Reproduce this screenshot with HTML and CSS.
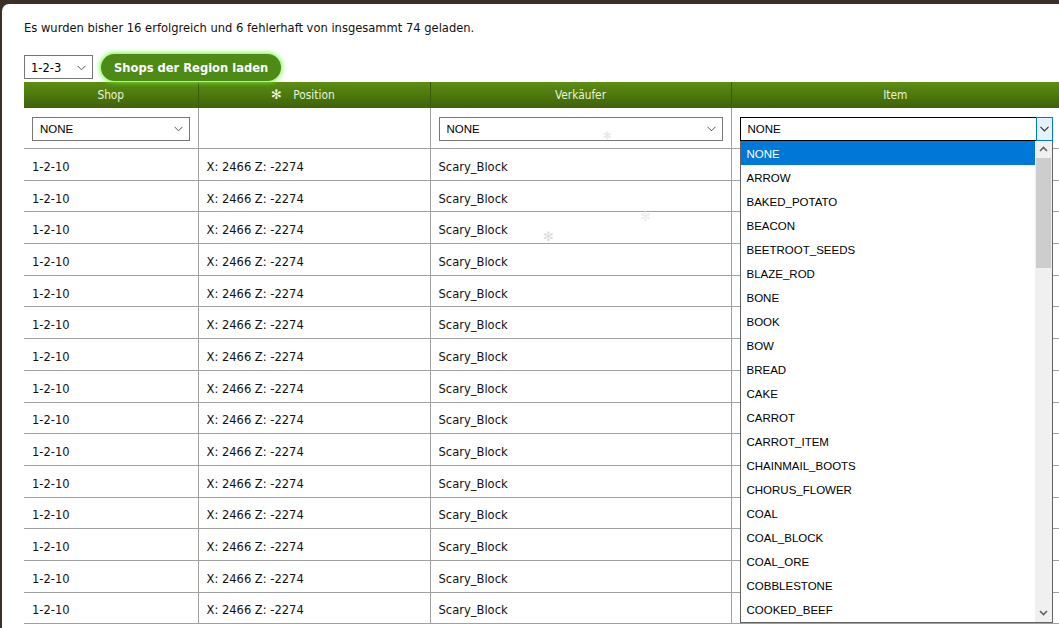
FILE: index.html
```html
<!DOCTYPE html>
<html lang="de">
<head>
<meta charset="utf-8">
<title>Shops</title>
<link rel="stylesheet" href="styles.css">
</head>
<body>
<div class="panel">
  <p class="status">Es wurden bisher 16 erfolgreich und 6 fehlerhaft von insgesammt 74 geladen.</p>
  <div class="controls">
    <div class="sel sel-region"><span>1-2-3</span><svg class="chev" width="9" height="6" viewBox="0 0 9 6"><path d="M0.5 0.8 L4.5 4.8 L8.5 0.8" fill="none" stroke="#555" stroke-width="1"/></svg></div>
    <button class="load">Shops der Region laden</button>
  </div>
  <table class="shops">
    <colgroup><col class="c1"><col class="c2"><col class="c3"><col class="c4"></colgroup>
    <thead>
      <tr class="head"><th>Shop</th><th>Position</th><th>Verkäufer</th><th>Item</th></tr>
      <tr class="filter">
        <td><div class="sel"><span>NONE</span><svg class="chev" width="9" height="6" viewBox="0 0 9 6"><path d="M0.5 0.8 L4.5 4.8 L8.5 0.8" fill="none" stroke="#555" stroke-width="1"/></svg></div></td>
        <td></td>
        <td><div class="sel"><span>NONE</span><svg class="chev" width="9" height="6" viewBox="0 0 9 6"><path d="M0.5 0.8 L4.5 4.8 L8.5 0.8" fill="none" stroke="#555" stroke-width="1"/></svg></div></td>
        <td class="item-cell">
          <div class="sel open"><span>NONE</span><div class="openbtn"><svg width="9" height="6" viewBox="0 0 9 6"><path d="M0.5 0.8 L4.5 4.8 L8.5 0.8" fill="none" stroke="#333" stroke-width="1.2"/></svg></div></div>
          <div class="dropdown">
            <ul class="options">
              <li class="active">NONE</li><li>ARROW</li><li>BAKED_POTATO</li><li>BEACON</li><li>BEETROOT_SEEDS</li><li>BLAZE_ROD</li><li>BONE</li><li>BOOK</li><li>BOW</li><li>BREAD</li><li>CAKE</li><li>CARROT</li><li>CARROT_ITEM</li><li>CHAINMAIL_BOOTS</li><li>CHORUS_FLOWER</li><li>COAL</li><li>COAL_BLOCK</li><li>COAL_ORE</li><li>COBBLESTONE</li><li>COOKED_BEEF</li>
            </ul>
            <div class="scrollbar">
              <div class="sb-btn"><svg width="9" height="6" viewBox="0 0 9 6"><path d="M1 5 L4.5 1.5 L8 5" fill="none" stroke="#606060" stroke-width="1.6"/></svg></div>
              <div class="sb-track"><div class="sb-thumb"></div></div>
              <div class="sb-btn"><svg width="9" height="6" viewBox="0 0 9 6"><path d="M1 1 L4.5 4.5 L8 1" fill="none" stroke="#606060" stroke-width="1.6"/></svg></div>
            </div>
          </div>
        </td>
      </tr>
    </thead>
    <tbody>
      <tr><td>1-2-10</td><td>X: 2466 Z: -2274</td><td>Scary_Block</td><td></td></tr>
      <tr><td>1-2-10</td><td>X: 2466 Z: -2274</td><td>Scary_Block</td><td></td></tr>
      <tr><td>1-2-10</td><td>X: 2466 Z: -2274</td><td>Scary_Block</td><td></td></tr>
      <tr><td>1-2-10</td><td>X: 2466 Z: -2274</td><td>Scary_Block</td><td></td></tr>
      <tr><td>1-2-10</td><td>X: 2466 Z: -2274</td><td>Scary_Block</td><td></td></tr>
      <tr><td>1-2-10</td><td>X: 2466 Z: -2274</td><td>Scary_Block</td><td></td></tr>
      <tr><td>1-2-10</td><td>X: 2466 Z: -2274</td><td>Scary_Block</td><td></td></tr>
      <tr><td>1-2-10</td><td>X: 2466 Z: -2274</td><td>Scary_Block</td><td></td></tr>
      <tr><td>1-2-10</td><td>X: 2466 Z: -2274</td><td>Scary_Block</td><td></td></tr>
      <tr><td>1-2-10</td><td>X: 2466 Z: -2274</td><td>Scary_Block</td><td></td></tr>
      <tr><td>1-2-10</td><td>X: 2466 Z: -2274</td><td>Scary_Block</td><td></td></tr>
      <tr><td>1-2-10</td><td>X: 2466 Z: -2274</td><td>Scary_Block</td><td></td></tr>
      <tr><td>1-2-10</td><td>X: 2466 Z: -2274</td><td>Scary_Block</td><td></td></tr>
      <tr><td>1-2-10</td><td>X: 2466 Z: -2274</td><td>Scary_Block</td><td></td></tr>
      <tr><td>1-2-10</td><td>X: 2466 Z: -2274</td><td>Scary_Block</td><td></td></tr>
    </tbody>
  </table>
</div>
<div class="snow" aria-hidden="true">
  <span class="flake f1">✻</span>
  <span class="flake f2">✻</span>
  <span class="flake f3">✻</span>
  <span class="flake f4">✻</span>
</div>
</body>
</html>
```
FILE: styles.css
```css
html, body {
  margin: 0;
  padding: 0;
  height: 100%;
  overflow: hidden;
}
body {
  background: #3a3026;
  font-family: "DejaVu Sans Condensed", "DejaVu Sans", sans-serif;
  font-size: 12.8px;
  color: #111;
}
.panel {
  margin: 4px 0 0 2px;
  background: #fff;
  border-radius: 7px 0 0 0;
  padding: 15px 0 0 22px;
  min-height: 700px;
}
.status {
  margin: 0 0 17px 0;
  line-height: 17px;
}
.controls {
  display: flex;
  align-items: center;
  gap: 8px;
  height: 28px;
  margin-bottom: 1px;
}
.sel {
  box-sizing: border-box;
  display: flex;
  align-items: center;
  justify-content: space-between;
  background: #fff;
  border: 1px solid #767676;
  height: 24px;
  padding: 1px 6px 0 7px;
  font-family: "Liberation Sans", Arial, sans-serif;
  font-size: 11.5px;
  color: #000;
}
.sel-region {
  width: 69px;
  font-family: "DejaVu Sans Condensed", "DejaVu Sans", sans-serif;
  font-size: 12.8px;
  padding-left: 6px;
}
.chev { display: block; }
.load {
  height: 27px;
  padding: 0 13px;
  border: none;
  border-radius: 14px;
  background: #4e8a16;
  color: #fff;
  font-family: "DejaVu Sans Condensed", "DejaVu Sans", sans-serif;
  font-weight: bold;
  font-size: 12.8px;
  box-shadow: 0 0 5px 1px #6cf53a;
}
.shops {
  border-collapse: collapse;
  table-layout: fixed;
  width: 1035px;
}
.c1 { width: 174px; }
.c2 { width: 232px; }
.c3 { width: 301px; }
.c4 { width: 328px; }
.head th {
  height: 26px;
  padding: 0;
  background: linear-gradient(#5b8e12, #3e6209);
  color: #eaf2dc;
  font-weight: normal;
  font-size: 11.8px;
  border-left: 1px solid #3a5a0c;
  text-align: center;
  vertical-align: middle;
}
.head th:first-child { border-left: none; }
.shops td {
  border-left: 1px solid #a0a0a0;
  border-bottom: 1px solid #a0a0a0;
  padding: 0 8px;
  vertical-align: middle;
}
.shops td:first-child { border-left: none; }
.filter td {
  height: 39px;
  padding-top: 1px;
}
.shops tbody td {
  height: 26.7px;
  line-height: 15px;
  padding-top: 4px;
  padding-bottom: 0;
}
.item-cell { position: relative; }
.sel.open {
  border: 1px solid #000;
  padding-right: 0;
  width: 313px;
  margin-left: 0;
  position: relative;
}
.openbtn {
  box-sizing: border-box;
  width: 17px;
  height: 24px;
  margin: -1px -1px -1px 0;
  background: #e5f1fb;
  border: 1px solid #0078d7;
  display: flex;
  align-items: center;
  justify-content: center;
}
.dropdown {
  position: absolute;
  left: 8px;
  top: 32.5px;
  width: 313px;
  height: 482px;
  box-sizing: border-box;
  background: #fff;
  border: 1px solid #646464;
  border-top: none;
  display: flex;
  z-index: 5;
}
.options {
  list-style: none;
  margin: 0;
  padding: 0;
  flex: 1;
  font-family: "Liberation Sans", Arial, sans-serif;
  font-size: 11.5px;
  color: #000;
}
.options li {
  height: 24px;
  line-height: 26px;
  padding-left: 6px;
}
.options li.active {
  background: #0078d7;
  color: #fff;
}
.scrollbar {
  width: 17px;
  background: #f0f0f0;
  display: flex;
  flex-direction: column;
}
.sb-btn {
  height: 17px;
  display: flex;
  align-items: center;
  justify-content: center;
}
.sb-track { flex: 1; }
.sb-thumb {
  margin: 0 1px;
  height: 110px;
  background: #cdcdcd;
}
.snow {
  position: absolute;
  left: 0;
  top: 0;
}
.flake {
  position: absolute;
  font-family: "DejaVu Sans", sans-serif;
  line-height: 1;
}
.f1 { left: 271px; top: 88px; font-size: 13px; color: #f4f8ee; }
.f2 { left: 603px; top: 131px; font-size: 10px; color: #e4e4e4; }
.f3 { left: 543px; top: 230px; font-size: 13px; color: #dcdcdc; }
.f4 { left: 640px; top: 210px; font-size: 13px; color: #ececec; }
```
